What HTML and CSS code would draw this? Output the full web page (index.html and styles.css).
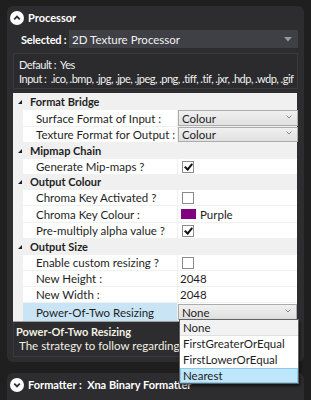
FILE: index.html
```html
<!DOCTYPE html>
<html>
<head>
<meta charset="utf-8">
<link rel="stylesheet" href="styles.css">
</head>
<body>
<div class="panel">
  <div class="header">
    <span class="circle"><svg width="14" height="14" viewBox="0 0 14 14"><circle cx="7" cy="7" r="7" fill="#fff"/><path d="M4.2 8.3 L7 5.5 L9.8 8.3" fill="none" stroke="#2d2d30" stroke-width="1.8"/></svg></span>
    <span class="title">Processor</span>
  </div>
  <div class="selrow">
    <span class="sellabel">Selected :</span>
    <div class="selcombo"><span>2D Texture Processor</span><svg class="tri" width="8" height="5" viewBox="0 0 8 5"><path d="M0 0 L8 0 L4 4.5 Z" fill="#999"/></svg></div>
  </div>
  <div class="info">
    <div>Default :&nbsp; Yes</div>
    <div>Input :&nbsp; .ico, .bmp, .jpg, .jpe, .jpeg, .png, .tiff, .tif, .jxr, .hdp, .wdp, .gif</div>
  </div>
  <div class="grid">
    <div class="cat"><span class="exp"></span>Format Bridge</div>
    <div class="row h17"><span class="gut"></span><span class="lab">Surface Format of Input :</span><span class="val"><span class="combo">Colour<svg class="chev" width="6" height="4" viewBox="0 0 6 4"><path d="M0.5 0.5 L3 3 L5.5 0.5" fill="none" stroke="#8a8a8a" stroke-width="1"/></svg></span></span></div>
    <div class="row"><span class="gut"></span><span class="lab">Texture Format for Output :</span><span class="val"><span class="combo">Colour<svg class="chev" width="6" height="4" viewBox="0 0 6 4"><path d="M0.5 0.5 L3 3 L5.5 0.5" fill="none" stroke="#8a8a8a" stroke-width="1"/></svg></span></span></div>
    <div class="cat"><span class="exp"></span>Mipmap Chain</div>
    <div class="row"><span class="gut"></span><span class="lab">Generate Mip-maps ?</span><span class="val"><span class="cb checked"></span></span></div>
    <div class="cat h15"><span class="exp"></span>Output Colour</div>
    <div class="row"><span class="gut"></span><span class="lab">Chroma Key Activated ?</span><span class="val"><span class="cb"></span></span></div>
    <div class="row h17"><span class="gut"></span><span class="lab">Chroma Key Colour :</span><span class="val"><span class="swatch"></span>Purple</span></div>
    <div class="row"><span class="gut"></span><span class="lab">Pre-multiply alpha value ?</span><span class="val"><span class="cb checked"></span></span></div>
    <div class="cat"><span class="exp"></span>Output Size</div>
    <div class="row"><span class="gut"></span><span class="lab">Enable custom resizing ?</span><span class="val"><span class="cb"></span></span></div>
    <div class="row"><span class="gut"></span><span class="lab">New Height :</span><span class="val"><span class="num">2048</span></span></div>
    <div class="row"><span class="gut"></span><span class="lab">New Width :</span><span class="val"><span class="num">2048</span></span></div>
    <div class="row rsel"><span class="gut"></span><span class="lab">Power-Of-Two Resizing</span><span class="val"><span class="combo">None<svg class="chev" width="6" height="4" viewBox="0 0 6 4"><path d="M0.5 0.5 L3 3 L5.5 0.5" fill="none" stroke="#8a8a8a" stroke-width="1"/></svg></span></span></div>
  </div>
  <div class="desc">
    <div class="dtitle">Power-Of-Two Resizing</div>
    <div class="dtext">The strategy to follow regarding power-of-two sizes.</div>
  </div>
</div>
<div class="panel panel2">
  <div class="header">
    <span class="circle"><svg width="14" height="14" viewBox="0 0 14 14"><circle cx="7" cy="7" r="7" fill="#fff"/><path d="M4.2 5.7 L7 8.5 L9.8 5.7" fill="none" stroke="#2d2d30" stroke-width="1.8"/></svg></span>
    <span class="title">Formatter :&nbsp; Xna Binary Formatter</span>
  </div>
</div>
<div class="popup">
  <div class="item first">None</div>
  <div class="item">FirstGreaterOrEqual</div>
  <div class="item">FirstLowerOrEqual</div>
  <div class="item hot">Nearest</div>
</div>
</body>
</html>
```

FILE: styles.css
```css
html, body {
  margin: 0;
  padding: 0;
}
body {
  background: #1f1f1f;
  font-family: Lato, "Noto Sans", sans-serif;
  font-size: 11.5px;
  color: #fff;
  width: 311px;
  height: 400px;
  overflow: hidden;
  position: relative;
}
.panel {
  margin: 6px 7px 0 7px;
  background: #2d2d30;
  border-radius: 6px;
  padding: 2px 0 5px 0;
}
.panel2 {
  margin-top: 11px;
  height: 40px;
  padding-top: 2px;
}
.header {
  display: flex;
  align-items: center;
  height: 19px;
  padding-left: 3px;
  gap: 4px;
}
.circle {
  display: flex;
  width: 14px;
  height: 14px;
}
.title {
  font-weight: bold;
  font-size: 11px;
  color: #fff;
  white-space: nowrap;
}
.selrow {
  display: flex;
  align-items: center;
  margin-top: 3px;
  padding-left: 14px;
  padding-right: 6px;
  height: 18px;
}
.sellabel {
  font-weight: bold;
  font-size: 11px;
  width: 48px;
  flex: none;
  white-space: nowrap;
  letter-spacing: -0.2px;
}
.selcombo {
  flex: 1;
  height: 18px;
  background: #3f3f46;
  display: flex;
  align-items: center;
  justify-content: space-between;
  padding: 0 6px 0 3px;
  color: #f1f1f1;
}
.info {
  margin: 5px 6px 0 6px;
  border: 1px solid #3a3a3e;
  background: #2b2b2e;
  padding: 4px 4px 2px 5px;
  line-height: 14px;
  font-size: 11px;
  letter-spacing: -0.5px;
  word-spacing: -0.1px;
  color: #f1f1f1;
  white-space: nowrap;
  overflow: hidden;
}
.grid {
  margin: 4px 7px 0 6px;
  background: #fff;
  color: #1e1e1e;
  border-bottom: 1px solid #a0a0a0;
}
.cat {
  height: 16px;
  background: #f0f0f0;
  display: flex;
  align-items: center;
  font-weight: bold;
  font-size: 11px;
  padding-left: 5px;
  gap: 8px;
}
.cat.h15 {
  height: 15px;
}
.exp {
  width: 0;
  height: 0;
  border-left: 4px solid transparent;
  border-bottom: 4px solid #1e1e1e;
  margin-top: 1px;
}
.row {
  height: 16px;
  display: grid;
  grid-template-columns: 10px 155px 1fr;
  border-top: 1px solid #f0f0f0;
  box-sizing: border-box;
}
.row.h17 {
  height: 17px;
}
.row.rsel {
  height: 19px;
}
.gut {
  background: #f0f0f0;
}
.lab {
  display: flex;
  align-items: center;
  padding-left: 13px;
  border-right: 1px solid #f0f0f0;
  white-space: nowrap;
}
.rsel .lab {
  background: #c9e4f5;
}
.val {
  display: flex;
  align-items: center;
  white-space: nowrap;
}
.combo {
  flex: 1;
  align-self: stretch;
  display: flex;
  align-items: center;
  justify-content: space-between;
  padding: 0 5px 0 3px;
  background: linear-gradient(#f0f0f0, #e0e0e0);
  border: 1px solid #acacac;
  margin: 0 -1px 0 0;
}
.rsel .combo {
  margin: 1px 0 1px 0;
}
.chev {
  flex: none;
  margin-top: -3px;
}
.cb {
  width: 10px;
  height: 10px;
  border: 1px solid #8a8a8a;
  background: #fff;
  margin-left: 4px;
  position: relative;
}
.cb.checked::after {
  content: "";
  position: absolute;
  left: 3px;
  top: 0px;
  width: 3px;
  height: 6px;
  border-right: 2px solid #111;
  border-bottom: 2px solid #111;
  transform: rotate(40deg);
}
.swatch {
  width: 15px;
  height: 10px;
  background: #800080;
  margin: 0 4px 0 3px;
}
.num {
  padding-left: 2px;
}
.desc {
  margin: 0 6px 0 6px;
  height: 35px;
  background: #2d2d30;
  border-left: 1px solid #3a3a3e;
  border-right: 1px solid #3a3a3e;
  border-bottom: 1px solid #3a3a3e;
  padding: 3px 0 0 2px;
  box-sizing: border-box;
  overflow: hidden;
  white-space: nowrap;
  color: #f3f0e0;
}
.dtitle {
  font-weight: bold;
  font-size: 11px;
  line-height: 14px;
}
.dtext {
  padding-left: 3px;
  line-height: 14px;
}
.popup {
  position: absolute;
  left: 179px;
  top: 319px;
  width: 118px;
  background: #fff;
  border: 1px solid #646464;
  box-shadow: 1px 2px 3px rgba(0,0,0,0.6);
  color: #1e1e1e;
  padding: 0;
}
.item {
  height: 16px;
  line-height: 16px;
  padding-left: 3px;
  box-sizing: border-box;
}
.item.first {
  background: #f2f2f2;
  border-bottom: 1px solid #e0e0e0;
}
.item.hot {
  background: #bee6fd;
  border: 1px solid #8ccaee;
  padding-left: 2px;
  height: 15px;
  line-height: 13px;
}
```
